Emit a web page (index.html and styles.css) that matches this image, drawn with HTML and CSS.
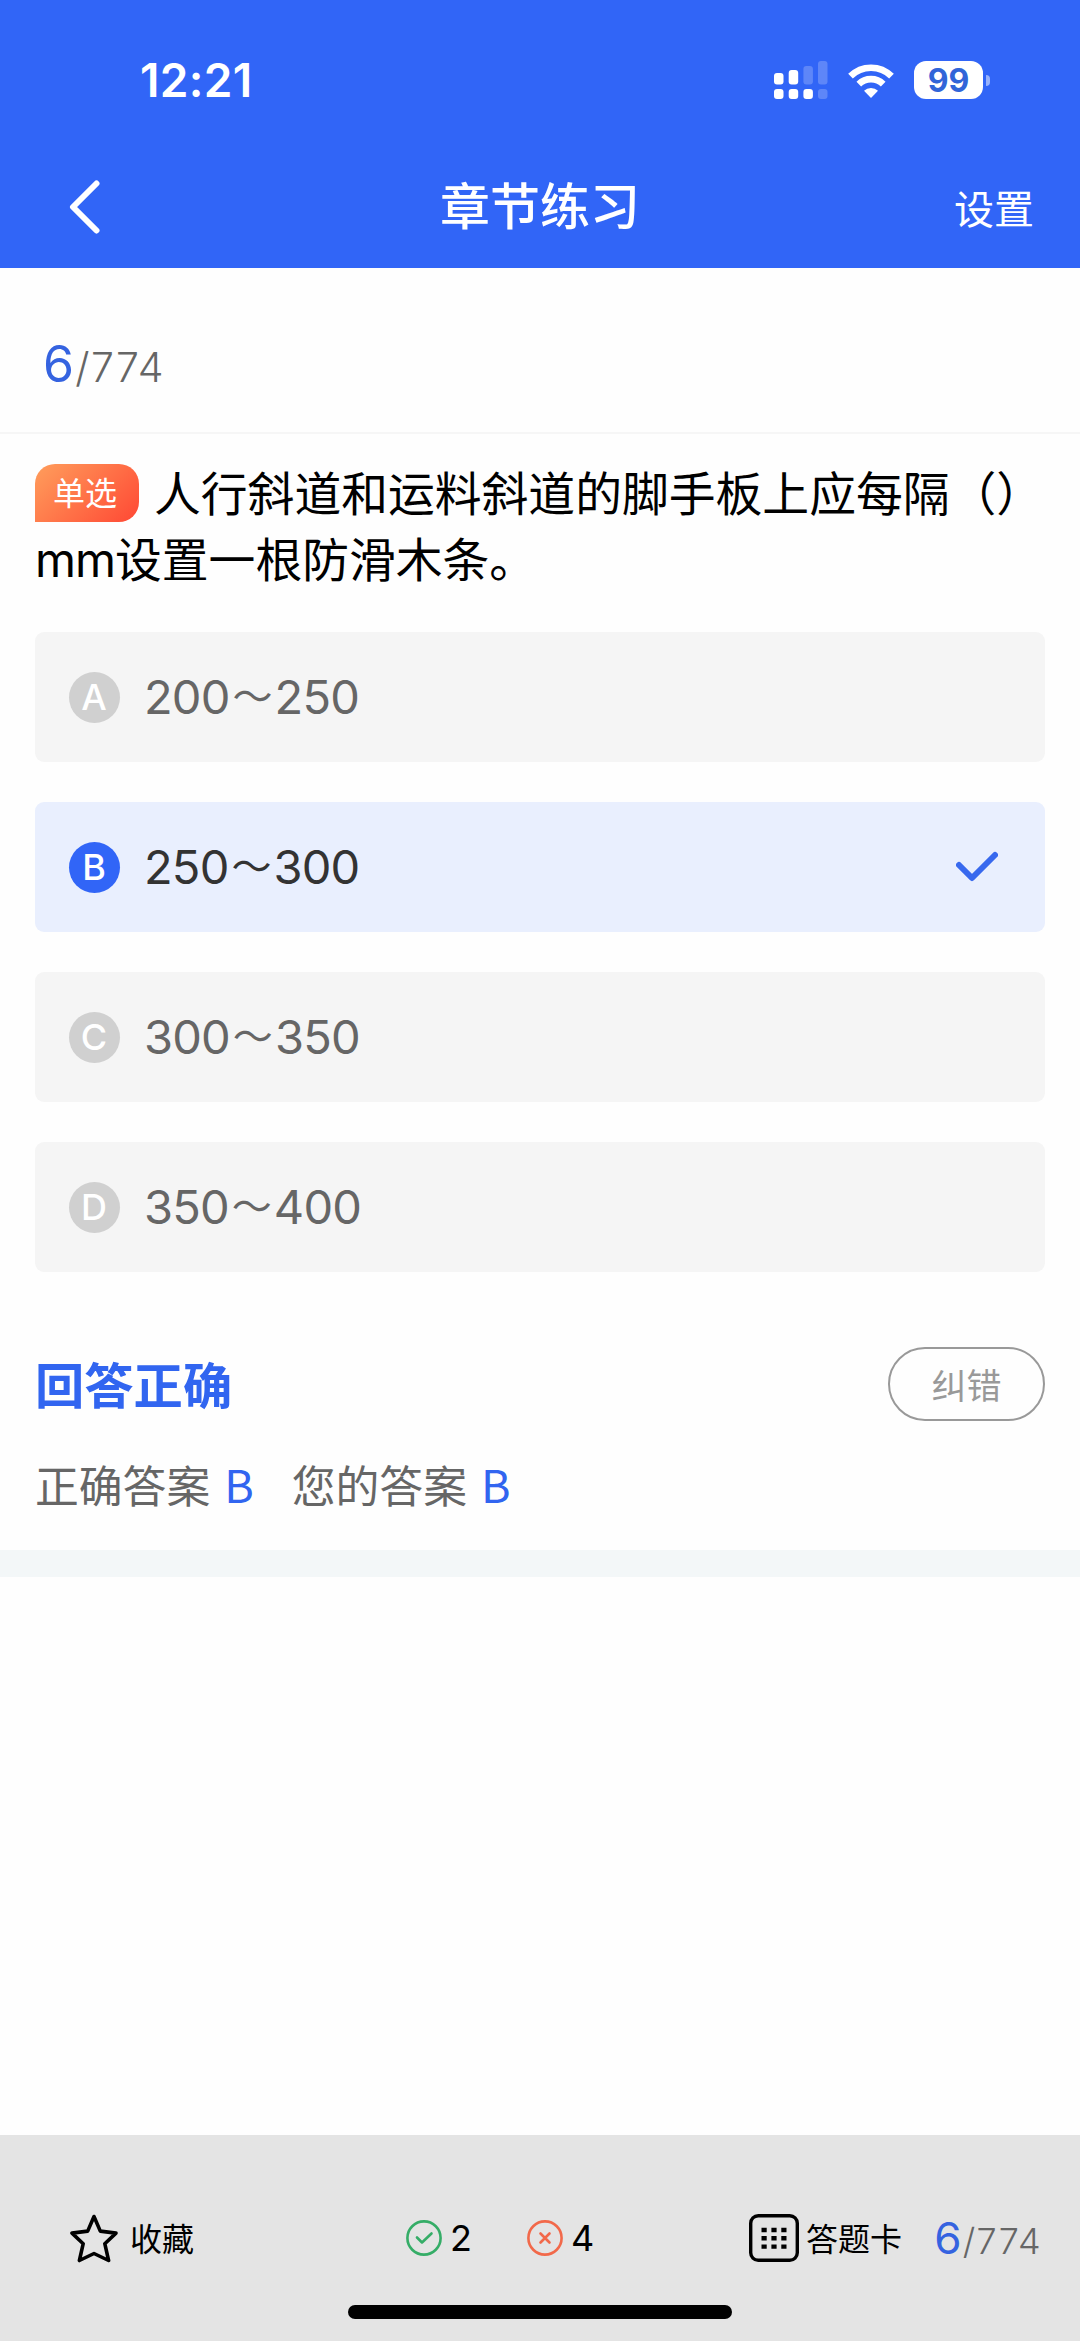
FILE: index.html
```
<!DOCTYPE html>
<html lang="zh-CN">
<head>
    <meta charset="UTF-8">
    <meta name="viewport" content="width=device-width, initial-scale=1.0">
    <title>章节练习</title>
    <link rel="stylesheet" href="styles.css">
</head>
<body>
    <header class="header">
        <div class="status-bar">
            <span class="time">12:21</span>
            <div class="status-icons">
                <svg class="signal" width="54" height="38" viewBox="0 0 54 38" fill="#fff">
                    <rect x="0" y="12" width="9.5" height="11.5" rx="3"/>
                    <rect x="14.7" y="9" width="9.5" height="14.5" rx="3"/>
                    <rect x="29.4" y="5" width="9.5" height="18.5" rx="3" opacity=".22"/>
                    <rect x="44" y="0" width="9.5" height="23.5" rx="3" opacity=".22"/>
                    <rect x="0" y="28" width="9.5" height="10" rx="3"/>
                    <rect x="14.7" y="28" width="9.5" height="10" rx="3"/>
                    <rect x="29.4" y="28" width="9.5" height="10" rx="3"/>
                    <rect x="44" y="28" width="9.5" height="10" rx="3" opacity=".22"/>
                </svg>
                <svg class="wifi" width="46" height="35" viewBox="0 0 46 35">
                    <path d="M2.5 13.2a29 29 0 0 1 41 0M10.8 21.2a17.3 17.3 0 0 1 24.4 0" fill="none" stroke="#fff" stroke-width="6.6"/>
                    <path d="M23 35l-7-7.2a10 10 0 0 1 14 0z" fill="#fff"/>
                </svg>
                <div class="battery"><span class="battery-level">99</span><i class="battery-cap"></i></div>
            </div>
        </div>
        <nav class="nav">
            <a class="back">
                <svg width="32" height="54" viewBox="0 0 32 54" fill="none" stroke="#fff" stroke-width="6" stroke-linecap="round" stroke-linejoin="round"><path d="M27.5 3.5L4 27l23.5 23.5"/></svg>
            </a>
            <h1>章节练习</h1>
            <a class="settings">设置</a>
        </nav>
    </header>

    <main class="main">
        <div class="progress"><b>6</b>/774</div>

        <section class="question">
            <p class="question-text"><span class="tag">单选</span>人行斜道和运料斜道的脚手板上应每隔（）<span class="unit">mm</span>设置一根防滑木条。</p>
            <ul class="options">
                <li class="option"><span class="letter">A</span><span class="value">200<i>～</i>250</span></li>
                <li class="option selected"><span class="letter">B</span><span class="value">250<i>～</i>300</span>
                    <svg class="check" width="42" height="32" viewBox="0 0 42 32" fill="none" stroke="#3869ee" stroke-width="6" stroke-linecap="round" stroke-linejoin="round"><path d="M3 14l13 13L39 4"/></svg>
                </li>
                <li class="option"><span class="letter">C</span><span class="value">300<i>～</i>350</span></li>
                <li class="option"><span class="letter">D</span><span class="value">350<i>～</i>400</span></li>
            </ul>
        </section>

        <section class="result">
            <div class="result-head">
                <h2>回答正确</h2>
                <button class="report">纠错</button>
            </div>
            <div class="answers">
                <span>正确答案<em>B</em></span>
                <span>您的答案<em>B</em></span>
            </div>
        </section>
    </main>

    <footer class="footer">
        <div class="toolbar">
            <a class="collect">
                <svg width="48" height="50" viewBox="0 0 48 50" fill="none" stroke="#000" stroke-width="3.6" stroke-linejoin="round"><path d="M24 3.5l6.3 14.6 15.7 2-11.2 10.6L38.6 47.5 24 40.5 9.4 47.5l3.8-16.8L2 20.1l15.7-2z"/></svg>
                <span>收藏</span>
            </a>
            <span class="count right">
                <svg width="36" height="36" viewBox="0 0 36 36" fill="none" stroke="#35ad67" stroke-width="2.6" stroke-linecap="round" stroke-linejoin="round"><circle cx="18" cy="18" r="16.6"/><path d="M11 17.5l5 5L25.5 13.5"/></svg>
                2
            </span>
            <span class="count wrong">
                <svg width="36" height="36" viewBox="0 0 36 36" fill="none" stroke="#f2694a" stroke-width="2.6" stroke-linecap="round"><circle cx="18" cy="18" r="16.6"/><path d="M13.5 13.5l9 9M22.5 13.5l-9 9"/></svg>
                4
            </span>
            <a class="card">
                <svg width="50" height="48" viewBox="0 0 50 48">
                    <rect x="1.7" y="1.7" width="46.6" height="44.6" rx="7.5" fill="none" stroke="#000" stroke-width="3.4"/>
                    <path d="M12.5 16h25M12.5 24.3h25M12.5 32.6h25" stroke="#000" stroke-width="4.4" stroke-dasharray="5.2 4.7"/>
                </svg>
                <span>答题卡</span>
            </a>
            <div class="progress small"><b>6</b>/774</div>
        </div>
        <div class="home-bar"></div>
    </footer>
</body>
</html>
```
FILE: styles.css
```
* {
    box-sizing: border-box;
}
body {
    margin: 0;
    height: 2341px;
    display: flex;
    flex-direction: column;
    font-family: "Noto Sans CJK SC", sans-serif;
    background-color: #fefefe;
    color: #000;
    text-spacing-trim: space-all;
}
h1, h2, p, ul {
    margin: 0;
    padding: 0;
}
i, em {
    font-style: normal;
}
svg {
    display: block;
    flex-shrink: 0;
}
.header {
    height: 268px;
    background-color: #3165f7;
    color: #fff;
}
.status-bar {
    height: 160px;
    padding: 0 90px 0 140px;
    display: flex;
    align-items: center;
    justify-content: space-between;
}
.time {
    font: 600 46px/60px Inter, sans-serif;
    letter-spacing: 0.3px;
}
.status-icons {
    display: flex;
    align-items: center;
}
.wifi {
    margin: 0 20px;
}
.battery {
    display: flex;
    align-items: center;
    gap: 3px;
}
.battery-level {
    width: 69px;
    height: 38px;
    border-radius: 12px;
    background-color: #fff;
    color: #3165d8;
    font: 700 32px/39px Inter, sans-serif;
    text-align: center;
}
.battery-cap {
    width: 4px;
    height: 11px;
    border-radius: 0 5px 5px 0;
    background-color: rgba(255, 255, 255, 0.5);
}
.nav {
    height: 94px;
    padding: 0 46px 0 69px;
    display: grid;
    grid-template-columns: 80px 1fr 103px;
    align-items: center;
}
.nav h1 {
    padding-bottom: 7px;
    text-align: center;
    font-size: 50px;
    line-height: 87px;
    font-weight: 500;
}
.settings {
    text-align: right;
    font-size: 40px;
    line-height: 94px;
}
.main {
    flex: 1;
}
.progress {
    height: 166px;
    padding: 58px 43px 0;
    border-bottom: 2px solid #f6f6f6;
    color: #666;
    font: 300 41px/76px Inter, sans-serif;
    letter-spacing: 1.3px;
}
.progress b {
    color: #3563e0;
    font-size: 50px;
    font-weight: 400;
}
.question {
    padding: 24px 35px 0;
}
.question-text {
    font-size: 46.8px;
    line-height: 66px;
}
.tag {
    display: inline-block;
    width: 104px;
    height: 58px;
    margin-right: 15px;
    padding: 0 4px 2px 0;
    border-radius: 20px 20px 20px 0;
    background: linear-gradient(135deg, #ff9e5c, #ff4834);
    color: #fff;
    font-size: 32px;
    line-height: 55px;
    text-align: center;
    vertical-align: 6px;
}
.unit {
    font-family: Inter, sans-serif;
    letter-spacing: -1px;
}
.options {
    margin-top: 39px;
    display: flex;
    flex-direction: column;
    gap: 40px;
    list-style: none;
}
.option {
    height: 130px;
    padding: 0 47px 0 34px;
    display: flex;
    align-items: center;
    border-radius: 9px;
    background-color: #f5f5f5;
    color: #666;
}
.letter {
    width: 51px;
    height: 51px;
    margin-right: 24px;
    padding-right: 1px;
    border-radius: 50%;
    background-color: #d0d0d0;
    color: #fff;
    font: 500 36px/51px Inter, sans-serif;
    text-align: center;
}
.value {
    display: flex;
    font: 400 47px/66px Inter, "Noto Sans CJK SC", sans-serif;
    letter-spacing: -0.8px;
}
.value i {
    width: 45px;
    font-size: 40px;
    text-align: center;
}
.option.selected {
    background-color: #e9effe;
    color: #333;
}
.selected .letter {
    background-color: #3165f7;
}
.check {
    margin-left: auto;
}
.result {
    padding: 75px 35px 0;
    height: 305px;
    border-bottom: 27px solid #f3f7f8;
}
.result-head {
    display: flex;
    align-items: center;
    justify-content: space-between;
}
.result h2 {
    padding-bottom: 4px;
    color: #3165f0;
    font-size: 49.3px;
    line-height: 69px;
    font-weight: 700;
}
.report {
    width: 157px;
    height: 74px;
    border: 2.5px solid #999;
    border-radius: 37px;
    background: none;
    color: #999;
    font: 400 35px/50px "Noto Sans CJK SC", sans-serif;
}
.answers {
    margin-top: 30px;
    display: flex;
    gap: 38px;
    color: #666;
    font-size: 43.8px;
    line-height: 66px;
}
.answers em {
    margin-left: 14px;
    color: #3165f0;
    font-size: 45px;
}
.footer {
    height: 206px;
    background-color: #e4e4e4;
}
.toolbar {
    height: 170px;
    padding: 36px 38px 0 70px;
    display: flex;
    align-items: center;
    font-size: 32px;
}
.toolbar a, .count {
    display: flex;
    align-items: center;
}
.toolbar a span {
    padding-bottom: 2px;
}
.collect {
    gap: 12px;
}
.count {
    gap: 8px;
    font: 400 36px/50px Inter, sans-serif;
}
.right {
    margin-left: 212px;
}
.wrong {
    margin-left: 55px;
}
.card {
    margin-left: auto;
    gap: 7px;
}
.progress.small {
    height: auto;
    margin-left: 32px;
    padding: 2px 0 0;
    border: 0;
    font-size: 36px;
    line-height: 60px;
}
.progress.small b {
    font-size: 44px;
}
.home-bar {
    width: 384px;
    height: 14px;
    margin: 0 auto;
    border-radius: 7px;
    background-color: #000;
}
```
